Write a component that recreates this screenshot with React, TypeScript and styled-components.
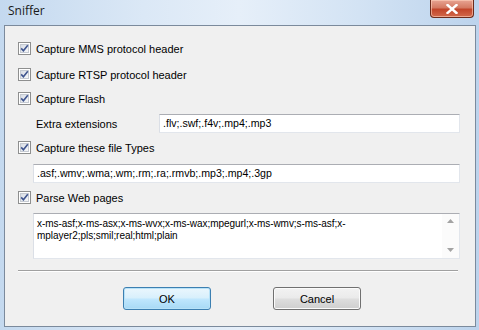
import { createGlobalStyle } from "styled-components"
import styled from "styled-components"

const GlobalStyle = createGlobalStyle`
    html, body {
        margin: 0;
        padding: 0;
        overflow: hidden;
        background: #ffffff;
    }
`

const Window = styled.div`
    width: 479px;
    height: 330px;
    display: flex;
    flex-direction: column;
    box-sizing: border-box;
    background: linear-gradient(90deg, #c4d9ef 0%, #dbe8f6 30%, #e6eff9 50%, #d3e3f4 75%, #bcd3ec 100%);
    font-family: "Liberation Sans", Arial, sans-serif;
    color: #000;
`

const TitleBar = styled.div`
    height: 25px;
    display: flex;
    align-items: flex-start;
    padding-left: 8px;
    box-sizing: border-box;
`

const Title = styled.span`
    font-family: "Open Sans", "Liberation Sans", sans-serif;
    font-size: 12px;
    line-height: 22px;
    color: #1a1a1a;
`

const CloseButton = styled.div`
    margin-left: auto;
    margin-right: 5px;
    width: 44px;
    height: 18px;
    box-sizing: border-box;
    border: 1px solid #6b2b1c;
    border-top: none;
    border-radius: 0 0 4px 4px;
    background: linear-gradient(180deg, #e8a493 0%, #d47a63 45%, #c2452a 55%, #d2694c 100%);
    box-shadow: inset 0 0 0 1px rgba(255, 210, 190, 0.6);
    display: flex;
    align-items: center;
    justify-content: center;
`

const Client = styled.div`
    flex: 1;
    margin: 0 3px 3px 4px;
    border: 1px solid #7b8a9c;
    background: #f0f0f0;
    padding: 0 15px 0 13px;
    display: flex;
    flex-direction: column;
`

const CheckRow = styled.label<{ $mt: number }>`
    display: flex;
    align-items: center;
    height: 13px;
    margin-top: ${(p) => p.$mt}px;
    gap: 5px;
    font-size: 11px;
    white-space: nowrap;
`

const FieldRow = styled.div<{ $mt: number; $indent: number }>`
    display: flex;
    align-items: center;
    margin-top: ${(p) => p.$mt}px;
    padding-left: ${(p) => p.$indent}px;
`

const FieldLabel = styled.span`
    width: 123px;
    font-size: 11px;
`

const TextBox = styled.div`
    flex: 1;
    height: 19px;
    box-sizing: border-box;
    border: 1px solid #e2e6ec;
    border-top-color: #abadb3;
    border-left-color: #dbdfe6;
    background: #ffffff;
    font-size: 10.6px;
    line-height: 17px;
    padding-left: 3px;
    white-space: nowrap;
    overflow: hidden;
`

const MemoBox = styled.div`
    flex: 1;
    height: 46px;
    box-sizing: border-box;
    border: 1px solid #e2e6ec;
    border-top-color: #abadb3;
    border-left-color: #dbdfe6;
    background: #ffffff;
    display: flex;
`

const MemoText = styled.div`
    flex: 1;
    padding: 4px 0 0 3px;
    font-size: 10px;
    line-height: 12px;
    letter-spacing: -0.05px;
    color: #000;
`

const ScrollTrack = styled.div`
    width: 17px;
    display: flex;
    flex-direction: column;
    justify-content: space-between;
    align-items: center;
    padding: 5px 0 6px;
    background: #fbfbfb;
`

const Separator = styled.div<{ $mt: number }>`
    margin-top: ${(p) => p.$mt}px;
    margin-right: 2px;
    height: 1px;
    background: #a0a0a0;
    border-bottom: 1px solid #ffffff;
`

const ButtonRow = styled.div<{ $mt: number }>`
    display: flex;
    justify-content: center;
    gap: 62px;
    padding-left: 6px;
    margin-top: ${(p) => p.$mt}px;
`

const Button = styled.button<{ $default?: boolean }>`
    width: 88px;
    height: 23px;
    box-sizing: border-box;
    border-radius: 3px;
    font-family: "Liberation Sans", Arial, sans-serif;
    font-size: 11px;
    color: #000;
    padding: 0;
    border: 1px solid ${(p) => (p.$default ? "#3c7fb1" : "#707070")};
    background: ${(p) =>
        p.$default
            ? "linear-gradient(180deg, #eaf6fd 0%, #d9f0fc 45%, #bee6fd 55%, #a7d9f5 100%)"
            : "linear-gradient(180deg, #f2f2f2 0%, #ebebeb 45%, #dddddd 55%, #cfcfcf 100%)"};
    box-shadow: inset 0 0 0 1px ${(p) => (p.$default ? "#b7e2f8" : "#fbfbfb")};
`

const CheckBox = () => (
    <svg width="13" height="13" viewBox="0 0 13 13">
        <defs>
            <linearGradient id="cbfill" x1="0" y1="0" x2="1" y2="1">
                <stop offset="0" stopColor="#d6dbe3" />
                <stop offset="1" stopColor="#f8f9fb" />
            </linearGradient>
        </defs>
        <rect x="0.5" y="0.5" width="12" height="12" fill="#ffffff" stroke="#8e8f8f" />
        <rect x="2.5" y="2.5" width="8" height="8" fill="url(#cbfill)" stroke="#c5cad2" />
        <path d="M3.2 6.4 L5.4 8.8 L9.8 3.2" fill="none" stroke="#3f558f" strokeWidth="1.6" />
    </svg>
)

const Arrow = ({ up }: { up: boolean }) => (
    <svg width="7" height="4" viewBox="0 0 7 4">
        <path d={up ? "M0 4 L3.5 0 L7 4 Z" : "M0 0 L7 0 L3.5 4 Z"} fill="#a3a3a3" />
    </svg>
)

const checks = [
    { label: "Capture MMS protocol header", mt: 16 },
    { label: "Capture RTSP protocol header", mt: 13 },
    { label: "Capture Flash", mt: 11 },
]

export default function App() {
    return (
        <>
            <GlobalStyle />
            <Window>
                <TitleBar>
                    <Title>Sniffer</Title>
                    <CloseButton>
                        <svg width="12" height="10" viewBox="0 0 12 10">
                            <path d="M1.5 1 L10.5 9 M10.5 1 L1.5 9" stroke="#ffffff" strokeWidth="2.4" strokeLinecap="square" />
                        </svg>
                    </CloseButton>
                </TitleBar>
                <Client>
                    {checks.map((c) => (
                        <CheckRow key={c.label} $mt={c.mt}>
                            <CheckBox />
                            {c.label}
                        </CheckRow>
                    ))}
                    <FieldRow $mt={9} $indent={18}>
                        <FieldLabel>Extra extensions</FieldLabel>
                        <TextBox>.flv;.swf;.f4v;.mp4;.mp3</TextBox>
                    </FieldRow>
                    <CheckRow $mt={8}>
                        <CheckBox />
                        Capture these file Types
                    </CheckRow>
                    <FieldRow $mt={10} $indent={15}>
                        <TextBox>.asf;.wmv;.wma;.wm;.rm;.ra;.rmvb;.mp3;.mp4;.3gp</TextBox>
                    </FieldRow>
                    <CheckRow $mt={8}>
                        <CheckBox />
                        Parse Web pages
                    </CheckRow>
                    <FieldRow $mt={9} $indent={15}>
                        <MemoBox>
                            <MemoText>
                                x-ms-asf;x-ms-asx;x-ms-wvx;x-ms-wax;mpegurl;x-ms-wmv;s-ms-asf;x-
                                <br />
                                mplayer2;pls;smil;real;html;plain
                            </MemoText>
                            <ScrollTrack>
                                <Arrow up />
                                <Arrow up={false} />
                            </ScrollTrack>
                        </MemoBox>
                    </FieldRow>
                    <Separator $mt={11} />
                    <ButtonRow $mt={15}>
                        <Button $default>OK</Button>
                        <Button>Cancel</Button>
                    </ButtonRow>
                </Client>
            </Window>
        </>
    )
}
